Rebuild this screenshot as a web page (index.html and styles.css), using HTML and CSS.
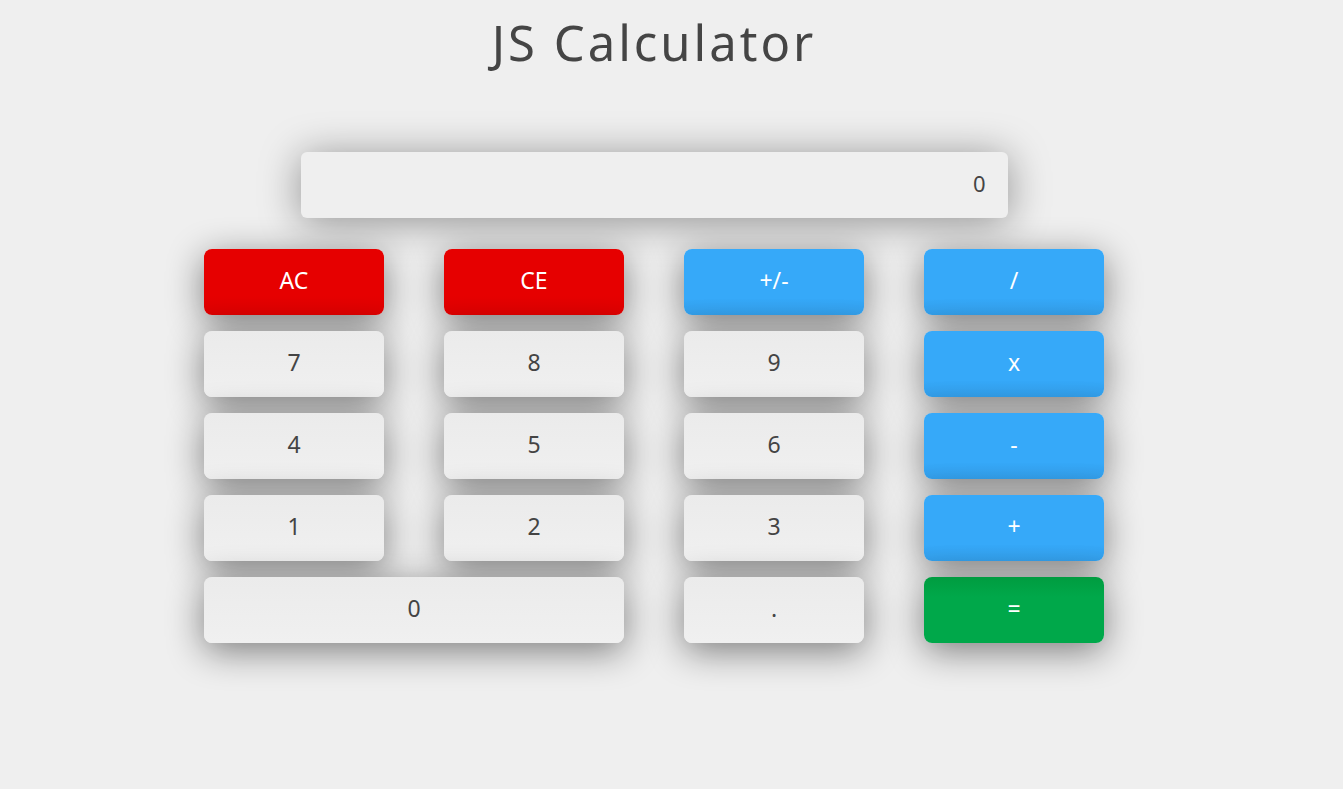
FILE: index.html
```html
<!DOCTYPE html>
<html>
<head>
<meta charset="utf-8">
<link rel="stylesheet" href="styles.css">
</head>
<body>
<h1 class="title">JS Calculator</h1>
<div class="calc">
  <div class="display">0</div>
  <div class="keys">
    <button class="key red">AC</button>
    <button class="key red">CE</button>
    <button class="key blue">+/-</button>
    <button class="key blue">/</button>
    <button class="key">7</button>
    <button class="key">8</button>
    <button class="key">9</button>
    <button class="key blue">x</button>
    <button class="key">4</button>
    <button class="key">5</button>
    <button class="key">6</button>
    <button class="key blue">-</button>
    <button class="key">1</button>
    <button class="key">2</button>
    <button class="key">3</button>
    <button class="key blue">+</button>
    <button class="key wide">0</button>
    <button class="key">.</button>
    <button class="key green">=</button>
  </div>
</div>
</body>
</html>
```
FILE: styles.css
```css
html, body {
  margin: 0;
  padding: 0;
  background: #efefef;
  font-family: "Noto Sans", "DejaVu Sans", sans-serif;
  color: #444;
}
body {
  padding: 0 35px 100px 0;
  min-height: 100vh;
  box-sizing: border-box;
}
.title {
  margin: 12px 0 0;
  text-align: center;
  font-weight: 400;
  font-size: 49px;
  line-height: 60px;
  color: #454545;
  letter-spacing: 3px;
}
.calc {
  width: 900px;
  margin: 80px auto 0;
  display: flex;
  flex-direction: column;
  align-items: center;
}
.display {
  width: 707px;
  height: 66px;
  box-sizing: border-box;
  padding-right: 22px;
  padding-bottom: 5px;
  background: #efefef;
  border-radius: 6px;
  box-shadow: 0 4px 40px rgba(0,0,0,0.4);
  display: flex;
  align-items: center;
  justify-content: flex-end;
  font-size: 22px;
  color: #444;
}
.keys {
  margin-top: 31px;
  display: grid;
  grid-template-columns: repeat(4, 180px);
  grid-auto-rows: 66px;
  column-gap: 60px;
  row-gap: 16px;
}
.key {
  border: none;
  border-radius: 8px;
  background: linear-gradient(#ebebeb, #f0f0f0);
  color: #444;
  font-family: inherit;
  font-size: 23px;
  padding: 0 0 5px;
  box-shadow: 0 8px 36px rgba(0,0,0,0.48);
}
.key.wide { grid-column: span 2; }
.key.red { background: linear-gradient(#e60000 70%, #dc0000); color: #fff; }
.key.blue { background: linear-gradient(#36a9f9 75%, #339ee9); color: #fff; }
.key.green { background: linear-gradient(#009c40, #00a84a 30%); color: #fff; }
```
